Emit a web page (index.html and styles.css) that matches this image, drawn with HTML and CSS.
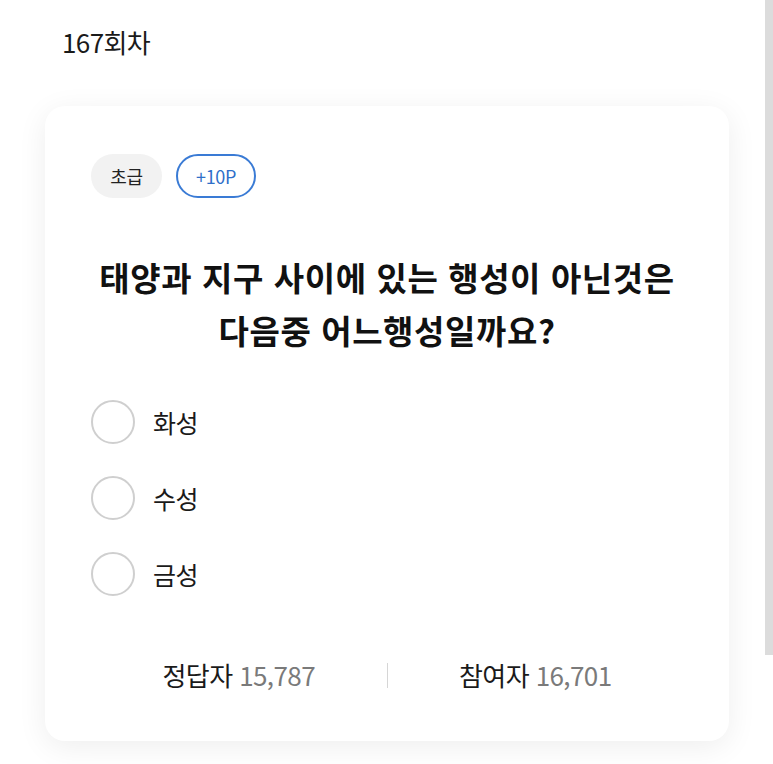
FILE: index.html
```html
<!DOCTYPE html>
<html lang="ko">
<head>
<meta charset="utf-8">
<link rel="stylesheet" href="styles.css">
</head>
<body>
<div class="page">
  <h1 class="round">167회차</h1>
  <section class="card">
    <div class="badges">
      <span class="badge level">초급</span>
      <span class="badge point">+10P</span>
    </div>
    <h2 class="question">태양과 지구 사이에 있는 행성이 아닌것은<br>다음중 어느행성일까요?</h2>
    <ul class="options">
      <li class="option"><span class="radio"></span><span class="label">화성</span></li>
      <li class="option"><span class="radio"></span><span class="label">수성</span></li>
      <li class="option"><span class="radio"></span><span class="label">금성</span></li>
    </ul>
    <div class="stats">
      <div class="stat">정답자 <span class="num">15,787</span></div>
      <div class="divider"></div>
      <div class="stat">참여자 <span class="num">16,701</span></div>
    </div>
  </section>
</div>
<div class="scrollbar"></div>
</body>
</html>
```

FILE: styles.css
```css
html, body {
  margin: 0;
  padding: 0;
  background: #ffffff;
}
body {
  font-family: "Noto Sans CJK KR", "Noto Sans", sans-serif;
  color: #1a1a1a;
  width: 773px;
  height: 764px;
  overflow: hidden;
  position: relative;
}
.page {
  padding: 0 44px 0 45px;
}
.round {
  margin: 0;
  padding: 25px 0 0 17px;
  height: 81px;
  font-size: 26px;
  font-weight: 400;
  line-height: 34px;
  letter-spacing: -0.6px;
  color: #1a1a1a;
  box-sizing: content-box;
}
.card {
  background: #fff;
  border-radius: 20px;
  box-shadow: 0 6px 30px rgba(0, 0, 0, 0.07);
  padding: 48px 46px 0 46px;
  height: 587px;
}
.badges {
  display: flex;
  gap: 14px;
}
.badge {
  display: flex;
  align-items: center;
  justify-content: center;
  height: 44px;
  box-sizing: border-box;
  border-radius: 22px;
  font-size: 18px;
  letter-spacing: -0.4px;
}
.level {
  width: 71px;
  background: #f2f2f2;
  color: #222;
}
.point {
  width: 80px;
  border: 2px solid #3a7bd5;
  color: #2f6fc9;
}
.question {
  margin: 53px 0 0;
  text-align: center;
  font-size: 33px;
  font-weight: 700;
  line-height: 53px;
  letter-spacing: 0.6px;
  color: #111;
  white-space: nowrap;
}
.options {
  list-style: none;
  margin: 43px 0 0;
  padding: 0;
  display: flex;
  flex-direction: column;
  gap: 32px;
}
.option {
  display: flex;
  align-items: center;
  gap: 18px;
  height: 44px;
}
.radio {
  width: 44px;
  height: 44px;
  box-sizing: border-box;
  border: 2px solid #cfcfcf;
  border-radius: 50%;
}
.label {
  font-size: 25px;
  letter-spacing: -0.4px;
  color: #1a1a1a;
}
.stats {
  margin-top: 62px;
  display: flex;
  align-items: center;
}
.stat {
  flex: 1;
  text-align: center;
  font-size: 26px;
  letter-spacing: -0.6px;
  color: #1a1a1a;
  line-height: 34px;
}
.num {
  color: #7a7a7a;
}
.divider {
  width: 1px;
  height: 25px;
  background: #d6d6d6;
}
.scrollbar {
  position: absolute;
  top: 0;
  right: 0;
  width: 8px;
  height: 655px;
  background: #dcdcdc;
}
```
